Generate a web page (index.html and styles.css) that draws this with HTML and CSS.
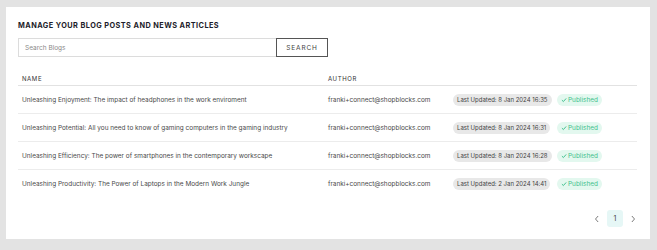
FILE: index.html
```html
<!DOCTYPE html>
<html lang="en">
<head>
  <meta charset="UTF-8">
  <title>Manage Blog Posts</title>
  <link rel="stylesheet" href="styles.css">
</head>
<body>

  <div class="panel">
    <h1>Manage your blog posts and news articles</h1>

    <div class="search-row">
      <input type="text" class="search-input" placeholder="Search Blogs">
      <button class="search-btn">Search</button>
    </div>

    <table class="posts">
      <thead>
        <tr>
          <th class="col-name">Name</th>
          <th class="col-author">Author</th>
          <th class="col-updated"></th>
          <th></th>
        </tr>
      </thead>
      <tbody>
        <tr>
          <td>Unleashing Enjoyment: The impact of headphones in the work enviroment</td>
          <td>franki+connect@shopblocks.com</td>
          <td><span class="badge-updated">Last Updated: 8 Jan 2024 16:35</span></td>
          <td><span class="badge-status"><svg viewBox="0 0 10 10" width="6" height="6"><path d="M1.5 5.2 L4 7.6 L8.6 2.4" fill="none" stroke="currentColor" stroke-width="1.6"/></svg>Published</span></td>
        </tr>
        <tr>
          <td>Unleashing Potential: All you need to know of gaming computers in the gaming industry</td>
          <td>franki+connect@shopblocks.com</td>
          <td><span class="badge-updated">Last Updated: 8 Jan 2024 16:31</span></td>
          <td><span class="badge-status"><svg viewBox="0 0 10 10" width="6" height="6"><path d="M1.5 5.2 L4 7.6 L8.6 2.4" fill="none" stroke="currentColor" stroke-width="1.6"/></svg>Published</span></td>
        </tr>
        <tr>
          <td>Unleashing Efficiency: The power of smartphones in the contemporary workscape</td>
          <td>franki+connect@shopblocks.com</td>
          <td><span class="badge-updated">Last Updated: 8 Jan 2024 16:28</span></td>
          <td><span class="badge-status"><svg viewBox="0 0 10 10" width="6" height="6"><path d="M1.5 5.2 L4 7.6 L8.6 2.4" fill="none" stroke="currentColor" stroke-width="1.6"/></svg>Published</span></td>
        </tr>
        <tr>
          <td>Unleashing Productivity: The Power of Laptops in the Modern Work Jungle</td>
          <td>franki+connect@shopblocks.com</td>
          <td><span class="badge-updated">Last Updated: 2 Jan 2024 14:41</span></td>
          <td><span class="badge-status"><svg viewBox="0 0 10 10" width="6" height="6"><path d="M1.5 5.2 L4 7.6 L8.6 2.4" fill="none" stroke="currentColor" stroke-width="1.6"/></svg>Published</span></td>
        </tr>
      </tbody>
    </table>

    <div class="pager">
      <span class="pager-arrow"><svg viewBox="0 0 8 10" width="6" height="8"><path d="M5.5 1 L2 5 L5.5 9" fill="none" stroke="currentColor" stroke-width="1.3"/></svg></span>
      <span class="pager-page">1</span>
      <span class="pager-arrow"><svg viewBox="0 0 8 10" width="6" height="8"><path d="M2.5 1 L6 5 L2.5 9" fill="none" stroke="currentColor" stroke-width="1.3"/></svg></span>
    </div>
  </div>

</body>
</html>
```

FILE: styles.css
```css
body {
  margin: 0;
  padding: 7px 7px 11px 6px;
  background: #e3e3e3;
  font-family: Inter, "Noto Sans", sans-serif;
  color: #333;
}
.panel {
  background: #fff;
  height: 232px;
  box-sizing: border-box;
  padding: 14px 13px 0 12px;
}
h1 {
  margin: 0 0 8px 0;
  font-size: 7.3px;
  font-weight: 700;
  letter-spacing: 0.45px;
  text-transform: uppercase;
  color: #1c1c2a;
  line-height: 9px;
}
.search-row {
  display: flex;
  height: 19px;
}
.search-input {
  width: 258px;
  box-sizing: border-box;
  border: 1px solid #dcdcdc;
  border-right: none;
  padding: 0 6px;
  font-family: inherit;
  font-size: 6.5px;
  color: #333;
  outline: none;
}
.search-input::placeholder {
  color: #8a8a8a;
}
.search-btn {
  width: 52px;
  box-sizing: border-box;
  background: #fff;
  border: 1px solid #555;
  font-family: inherit;
  font-size: 6.5px;
  letter-spacing: 0.9px;
  text-transform: uppercase;
  color: #444;
  padding: 0;
  cursor: pointer;
}
.posts {
  width: 619px;
  margin-top: 13px;
  border-collapse: collapse;
  font-size: 6.45px;
  color: #4a4a4a;
  table-layout: fixed;
}
.posts th {
  text-align: left;
  vertical-align: bottom;
  font-weight: 400;
  font-size: 6px;
  letter-spacing: 0.6px;
  text-transform: uppercase;
  color: #333;
  height: 12px;
  padding: 0 4px 3px 4px;
  border-bottom: 1.5px solid #e2e2e2;
}
.posts td {
  height: 27px;
  padding: 0 4px;
  border-bottom: 1px solid #ececec;
  white-space: nowrap;
}
.posts tbody tr:last-child td {
  border-bottom: none;
}
.col-name {
  width: 298px;
}
.col-author {
  width: 117px;
}
.col-updated {
  width: 96px;
}
.badge-updated {
  display: inline-block;
  background: #e8e8e8;
  color: #444;
  border-radius: 6px;
  padding: 2px 4px;
  font-size: 6px;
  line-height: 8px;
}
.badge-status {
  display: inline-flex;
  align-items: center;
  gap: 1px;
  background: #e3f8ef;
  color: #3fbf8c;
  border-radius: 6px;
  padding: 2px 4px;
  line-height: 8px;
}
.pager {
  display: flex;
  justify-content: flex-end;
  align-items: center;
  gap: 7px;
  margin-top: 13px;
  padding-right: 1px;
}
.pager-arrow {
  display: flex;
  color: #777;
}
.pager-page {
  width: 16px;
  height: 17px;
  display: flex;
  align-items: center;
  justify-content: center;
  background: #e6f7f6;
  border-radius: 3px;
  font-size: 7px;
  color: #444;
}
```
